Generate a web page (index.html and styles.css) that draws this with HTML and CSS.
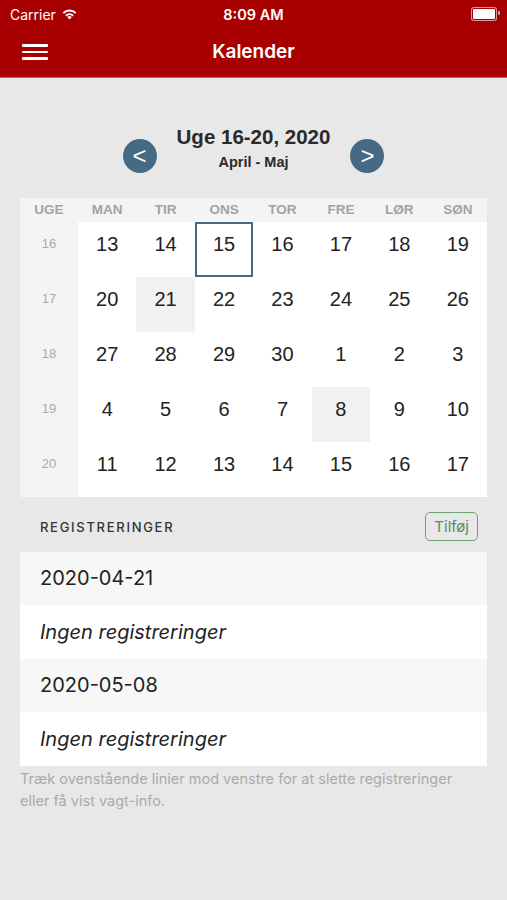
FILE: index.html
```html
<!DOCTYPE html>
<html lang="da">
<head>
  <meta charset="UTF-8">
  <meta name="viewport" content="width=device-width, initial-scale=1.0">
  <title>Kalender</title>
  <link rel="stylesheet" href="styles.css">
</head>
<body>
  <!-- Status bar + nav -->
  <header class="topbar">
    <div class="status">
      <div class="carrier">Carrier
        <svg class="wifi" width="17" height="12" viewBox="0 0 17 12">
          <path d="M8.5 11.5 L6.2 9 A3.3 3.3 0 0 1 10.8 9 Z" fill="#fff"/>
          <path d="M4.2 7 A6.2 6.2 0 0 1 12.8 7 L11.4 8.4 A4.3 4.3 0 0 0 5.6 8.4 Z" fill="#fff"/>
          <path d="M1.6 4.4 A9.8 9.8 0 0 1 15.4 4.4 L14 5.8 A7.8 7.8 0 0 0 3 5.8 Z" fill="#fff"/>
        </svg>
      </div>
      <div class="time">8:09 AM</div>
      <div class="battery"><span></span></div>
    </div>
    <nav class="navbar">
      <div class="burger"><span></span><span></span><span></span></div>
      <div class="nav-title">Kalender</div>
    </nav>
  </header>

  <main>
    <div class="week-head">
      <button class="arrow">&lt;</button>
      <div class="week-title">
        <div class="uge">Uge 16-20, 2020</div>
        <div class="months">April - Maj</div>
      </div>
      <button class="arrow">&gt;</button>
    </div>

    <div class="calendar" id="calendar"></div>

    <div class="reg-head">
      <span>REGISTRERINGER</span>
      <button class="add">Tilføj</button>
    </div>

    <div class="reg-list">
      <div class="reg-date">2020-04-21</div>
      <div class="reg-none">Ingen registreringer</div>
      <div class="reg-date">2020-05-08</div>
      <div class="reg-none last">Ingen registreringer</div>
    </div>

    <p class="hint">Træk ovenstående linier mod venstre for at slette registreringer eller få vist vagt-info.</p>
  </main>

  <script>
    const cal = document.getElementById('calendar');
    const heads = ['UGE', 'MAN', 'TIR', 'ONS', 'TOR', 'FRE', 'LØR', 'SØN'];
    const weeks = [
      [16, [13, 14, 15, 16, 17, 18, 19]],
      [17, [20, 21, 22, 23, 24, 25, 26]],
      [18, [27, 28, 29, 30, 1, 2, 3]],
      [19, [4, 5, 6, 7, 8, 9, 10]],
      [20, [11, 12, 13, 14, 15, 16, 17]],
    ];

    heads.forEach(h => {
      const d = document.createElement('div');
      d.className = 'head';
      d.innerText = h;
      cal.appendChild(d);
    });

    weeks.forEach(([wk, days], r) => {
      const w = document.createElement('div');
      w.className = 'wk';
      w.innerText = wk;
      cal.appendChild(w);
      days.forEach((day, c) => {
        const d = document.createElement('div');
        d.className = 'day';
        if (r === 0 && c === 2) d.classList.add('today');
        if ((r === 1 && c === 1) || (r === 3 && c === 4)) d.classList.add('marked');
        d.innerText = day;
        cal.appendChild(d);
      });
    });
  </script>
</body>
</html>
```

FILE: styles.css
```css
body {
  margin: 0;
  font-family: "Liberation Sans", Arial, sans-serif;
  background-color: #e8e8e8;
  width: 507px;
  height: 900px;
  overflow: hidden;
}

/* Header */
.topbar {
  background-color: #a80000;
  color: #fff;
  border-bottom: 1px solid #c56060;
}

.status {
  height: 28px;
  display: flex;
  align-items: center;
  justify-content: space-between;
  padding: 0 10px;
  font-family: Inter, sans-serif;
}

.carrier {
  display: flex;
  align-items: center;
  gap: 5px;
  font-size: 14px;
  width: 100px;
}

.time {
  font-size: 14.5px;
  font-weight: 600;
}

.battery {
  width: 100px;
  display: flex;
  justify-content: flex-end;
  align-items: center;
}

.battery span {
  display: block;
  width: 22px;
  height: 10px;
  border: 1px solid rgba(255, 255, 255, 0.6);
  border-radius: 3px;
  background: #fff;
  background-clip: content-box;
  padding: 1px;
  position: relative;
}

.battery span::after {
  content: "";
  position: absolute;
  right: -4px;
  top: 3px;
  width: 2px;
  height: 4px;
  background: rgba(255, 255, 255, 0.6);
  border-radius: 0 1px 1px 0;
}

.navbar {
  height: 49px;
  display: flex;
  align-items: center;
  position: relative;
}

.burger {
  margin-left: 22px;
  display: flex;
  flex-direction: column;
  gap: 4px;
  margin-top: -1px;
}

.burger span {
  display: block;
  width: 26px;
  height: 2.5px;
  background: #fff;
  border-radius: 1px;
}

.nav-title {
  position: absolute;
  left: 0;
  right: 0;
  text-align: center;
  font-family: Inter, sans-serif;
  font-size: 19px;
  font-weight: 600;
  pointer-events: none;
  margin-top: -2px;
}

main {
  padding: 0 20px;
}

/* Week heading */
.week-head {
  display: flex;
  align-items: center;
  justify-content: center;
  gap: 20px;
  padding-top: 44px;
  height: 58px;
  margin-bottom: 18px;
}

.week-title {
  text-align: center;
  color: #2a2a2a;
  font-weight: bold;
  margin-top: -8px;
}

.uge {
  font-size: 20.5px;
}

.months {
  font-size: 14.5px;
  margin-top: 5px;
}

.arrow {
  width: 34px;
  height: 34px;
  border-radius: 50%;
  border: none;
  background-color: #476a84;
  color: #fff;
  font-family: "Liberation Sans", Arial, sans-serif;
  font-size: 24px;
  line-height: 34px;
  padding: 0;
  margin-top: 10px;
}

/* Calendar grid */
.calendar {
  display: grid;
  grid-template-columns: 58px repeat(7, 1fr);
  grid-template-rows: 24px repeat(5, 55px);
  background: #fff;
}

.head {
  background-color: #f4f4f4;
  color: #a3a3a3;
  font-size: 13.5px;
  font-weight: bold;
  text-align: center;
  line-height: 24px;
}

.wk {
  background-color: #f4f4f4;
  color: #aaa;
  font-size: 13px;
  text-align: center;
  padding-top: 14px;
}

.day {
  color: #222;
  font-size: 20px;
  text-align: center;
  padding-top: 11px;
  box-sizing: border-box;
}

.day.today {
  border: 2px solid #476a84;
  padding-top: 9px;
}

.day.marked {
  background-color: #f1f1f1;
}

/* Registrations */
.reg-head {
  display: flex;
  align-items: center;
  justify-content: space-between;
  padding: 15px 9px 11px 20px;
}

.reg-head span {
  font-family: Inter, sans-serif;
  font-size: 13px;
  letter-spacing: 1.7px;
  color: #333;
  font-weight: 500;
}

.add {
  font-family: Inter, sans-serif;
  font-size: 15px;
  color: #5a8f5a;
  background: transparent;
  border: 1.5px solid #6fa06f;
  border-radius: 5px;
  padding: 4px 8px;
}

.reg-list {
  font-family: Inter, sans-serif;
  font-size: 20px;
  color: #222;
}

.reg-date {
  background-color: #f7f7f7;
  height: 53px;
  line-height: 52px;
  padding-left: 20px;
}

.reg-none {
  background-color: #fff;
  height: 54px;
  line-height: 54px;
  padding-left: 20px;
  font-style: italic;
  box-shadow: inset 20px -1px 0 #fff, inset 0 -1px 0 #e2e2e2;
}

.reg-none.last {
  box-shadow: none;
}

.hint {
  margin: 2px 0 0;
  color: #aaa;
  font-family: Inter, sans-serif;
  font-size: 14.5px;
  line-height: 22px;
  padding-right: 10px;
}
```
